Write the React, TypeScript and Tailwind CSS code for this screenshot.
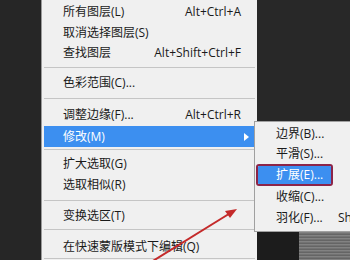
import React from 'react';

type Item =
  | { kind: 'item'; label: string; shortcut?: string; h: number; active?: boolean; sub?: boolean }
  | { kind: 'sep'; h: number; line: number };

const mainItems: Item[] = [
  { kind: 'item', label: '所有图层(L)', shortcut: 'Alt+Ctrl+A', h: 20 },
  { kind: 'item', label: '取消选择图层(S)', h: 21 },
  { kind: 'item', label: '查找图层', shortcut: 'Alt+Shift+Ctrl+F', h: 20 },
  { kind: 'sep', h: 9, line: 4 },
  { kind: 'item', label: '色彩范围(C)...', h: 22 },
  { kind: 'sep', h: 9, line: 4 },
  { kind: 'item', label: '调整边缘(F)...', shortcut: 'Alt+Ctrl+R', h: 23 },
  { kind: 'item', label: '修改(M)', h: 21, active: true, sub: true },
  { kind: 'sep', h: 6, line: 2 },
  { kind: 'item', label: '扩大选取(G)', h: 21 },
  { kind: 'item', label: '选取相似(R)', h: 21 },
  { kind: 'sep', h: 10, line: 5 },
  { kind: 'item', label: '变换选区(T)', h: 21 },
  { kind: 'sep', h: 9, line: 3 },
  { kind: 'item', label: '在快速蒙版模式下编辑(Q)', h: 23 },
  { kind: 'sep', h: 4, line: 0 },
];

const subItems = [
  { label: '边界(B)...', h: 20 },
  { label: '平滑(S)...', h: 20 },
  { label: '扩展(E)...', h: 22, active: true },
  { label: '收缩(C)...', h: 22 },
  { label: '羽化(F)...', shortcut: 'Shift+F6', h: 20 },
];

const font = 'font-["Open_Sans","Noto_Sans_CJK_SC",sans-serif]';

const MenuRow: React.FC<{ item: Item }> = ({ item }) => {
  if (item.kind === 'sep') {
    return (
      <div className="px-[2px]" style={{ height: item.h, paddingTop: item.line }}>
        <div className="h-px bg-[#c5c5c5]" />
      </div>
    );
  }
  return (
    <div className="px-[2px]" style={{ height: item.h }}>
      <div
        className={`h-full flex items-center pl-[19px] pr-[14px] ${
          item.active ? 'bg-[#3c8ff0] text-white' : 'text-[#1a1a1a]'
        }`}
      >
        <span className="flex-1 whitespace-nowrap">{item.label}</span>
        {item.shortcut && <span className="whitespace-nowrap">{item.shortcut}</span>}
        {item.sub && (
          <svg width="5" height="8" viewBox="0 0 5 8" className="-mr-[8px]">
            <path d="M0 0 L5 4 L0 8 Z" fill="#ffffff" />
          </svg>
        )}
      </div>
    </div>
  );
};

const App: React.FC = () => {
  return (
    <div className={`relative w-[350px] h-[260px] overflow-hidden flex text-[12px] leading-none ${font}`}>
      <div className="w-[41px] bg-[#262626] shrink-0" />
      <div className="w-[216px] shrink-0 bg-[#f0f0f0] border-l border-[#9a9a9a] pt-[2px]">
        {mainItems.map((it, i) => (
          <MenuRow key={i} item={it} />
        ))}
      </div>
      <div className="flex-1 flex flex-col">
        <div className="h-[232px] bg-[#282828]" />
        <div className="flex-1 flex">
          <div className="w-[42px] bg-[#1c1c1c]" />
          <div className="flex-1 bg-[repeating-linear-gradient(180deg,#6a6a6a_0px,#9a9a9a_1px,#4a4a4a_2px,#808080_3px)]" />
        </div>
      </div>

      {/* submenu */}
      <div className="absolute left-[254px] top-[121px] w-[110px] h-[111px] bg-[#f0f0f0] border border-[#a0a0a0] pt-[2px]">
        {subItems.map((s, i) => (
          <div key={i} className="px-[1px]" style={{ height: s.h }}>
            {s.active ? (
              <div className="h-full w-[77px] rounded-[3px] border-2 border-[#8c2448]">
                <div className="h-full bg-[#3c8ff0] text-white flex items-center pl-[18px] rounded-[1px]">
                  {s.label}
                </div>
              </div>
            ) : (
              <div className="h-full flex items-center pl-[20px] text-[#1a1a1a] whitespace-nowrap">
                <span className="w-[62px] shrink-0">{s.label}</span>
                {s.shortcut && <span className="shrink-0">{s.shortcut}</span>}
              </div>
            )}
          </div>
        ))}
      </div>

      {/* red arrow */}
      <svg className="absolute left-0 top-0 pointer-events-none" width="350" height="260" viewBox="0 0 350 260">
        <line x1="148" y1="264" x2="232" y2="212" stroke="#c42a2a" strokeWidth="2" />
        <path d="M237 209 L225 211 L230 218 Z" fill="#c42a2a" />
      </svg>
    </div>
  );
};

export default App;
